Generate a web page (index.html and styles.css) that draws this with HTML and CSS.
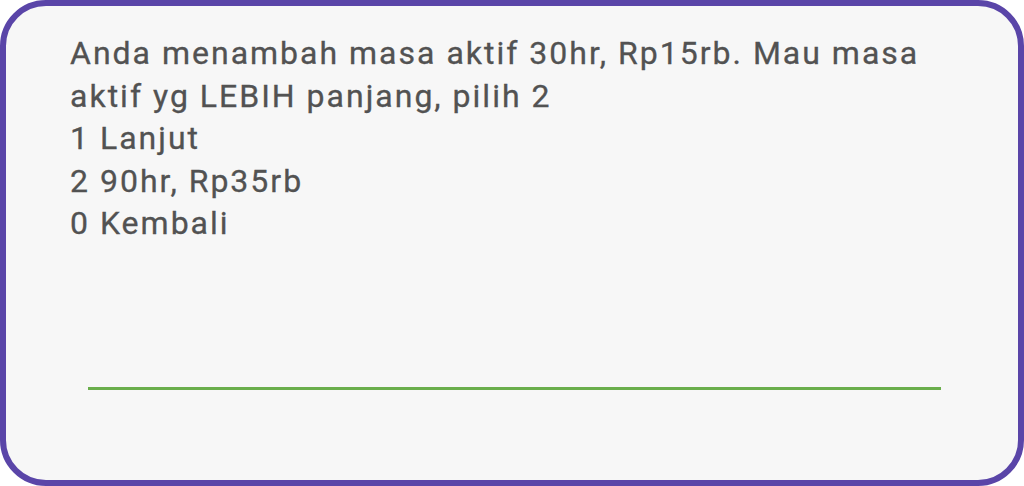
FILE: index.html
```html
<!DOCTYPE html>
<html lang="en">
<head>
  <meta charset="UTF-8" />
  <meta name="viewport" content="width=device-width, initial-scale=1.0"/>
  <title>USSD</title>
  <link rel="stylesheet" href="styles.css">
</head>
<body>
  <div class="dialog">
    <div class="message">
      <p>Anda menambah masa aktif 30hr, Rp15rb. Mau masa aktif yg LEBIH panjang, pilih 2</p>
      <p>1 Lanjut</p>
      <p>2 90hr, Rp35rb</p>
      <p>0 Kembali</p>
    </div>
    <div class="input-line"></div>
  </div>
</body>
</html>
```

FILE: styles.css
```css
html, body {
  margin: 0;
  background: #fff;
}
body {
  font-family: Roboto, "Noto Sans", sans-serif;
}
.dialog {
  box-sizing: border-box;
  width: 1024px;
  height: 486px;
  border: 6px solid #5a45a8;
  border-radius: 46px;
  background: #f7f7f7;
  display: flex;
  flex-direction: column;
  padding: 26px 64px 90px 64px;
}
.message {
  color: #525252;
  font-size: 32px;
  line-height: 42.5px;
  letter-spacing: 2px;
  width: 880px;
  -webkit-text-stroke: 0.3px #525252;
}
.message p {
  margin: 0;
}
.input-line {
  margin-top: auto;
  margin-left: 18px;
  width: 853px;
  height: 3px;
  background: #6aae4c;
}
```
